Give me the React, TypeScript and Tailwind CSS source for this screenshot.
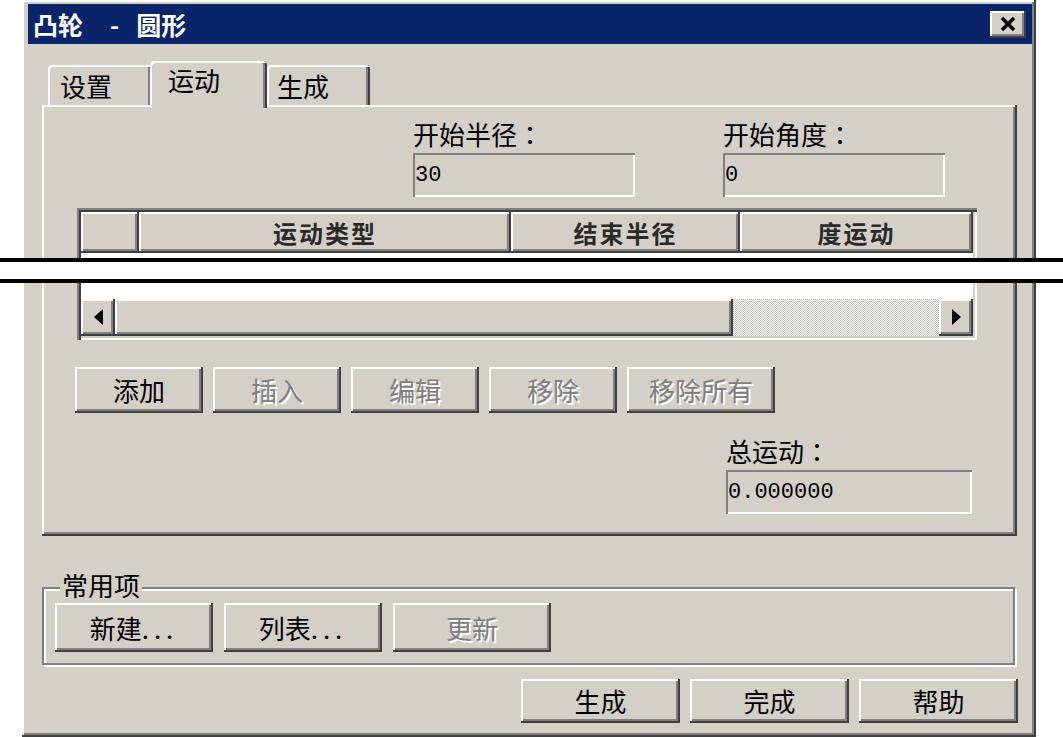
import React from "react";

const raised =
  "shadow-[inset_-2px_-2px_#404040,inset_2px_2px_#ffffff,inset_-4px_-4px_#808080]";
const sunken = "shadow-[inset_2px_2px_#808080,inset_-2px_-2px_#ffffff]";
const disabledText = "text-[#808080] [text-shadow:2px_2px_0_#ffffff]";

type BtnProps = {
  label: React.ReactNode;
  className: string;
  disabled?: boolean;
};

function Btn({ label, className, disabled }: BtnProps) {
  return (
    <div
      className={`flex shrink-0 items-center justify-center bg-[#d4d0c8] text-[26px] leading-[30px] ${raised} ${className} ${
        disabled ? disabledText : "text-black"
      }`}
    >
      {label}
    </div>
  );
}

function Field({ label, value, className }: { label: string; value: string; className: string }) {
  return (
    <div className={className}>
      <div className="text-[26px] leading-[30px] whitespace-nowrap">
        {label}
        <span className="font-['Noto_Sans_CJK_JP',sans-serif]">：</span>
      </div>
      <div
        className={`mt-[4px] flex h-[44px] items-center pl-[2px] font-['Liberation_Mono',monospace] text-[22px] ${sunken}`}
      >
        {value}
      </div>
    </div>
  );
}

function Arrow({ dir }: { dir: "left" | "right" }) {
  return (
    <div className={`flex w-[34px] shrink-0 items-center justify-center bg-[#d4d0c8] ${raised}`}>
      <svg width="9" height="16" viewBox="0 0 9 16" className="-mt-[2px]">
        <path d={dir === "left" ? "M9 0 L0 8 L9 16 Z" : "M0 0 L9 8 L0 16 Z"} fill="#000" />
      </svg>
    </div>
  );
}

const dots = <span className="tracking-[5px]">...</span>;

export default function App() {
  return (
    <div className="relative h-[737px] w-[1063px] overflow-hidden bg-white font-['Noto_Sans_CJK_SC','Noto_Sans_CJK_JP',sans-serif] text-black">
      <div
        className={`ml-[22px] flex h-[737px] w-[1014px] flex-col bg-[#d4d0c8] pt-[4px] pr-[4px] pl-[6px] ${raised}`}
      >
        {/* title bar */}
        <div className="flex h-[40px] shrink-0 items-center bg-[#0a246a] pl-[5px] text-[25px] leading-none font-bold text-white">
          <span>凸轮</span>
          <span className="ml-[27px]">-</span>
          <span className="ml-[17px]">圆形</span>
          <div className={`mr-[6px] ml-auto flex h-[27px] w-[36px] items-center justify-center bg-[#d4d0c8] ${raised}`}>
            <svg width="16" height="14" viewBox="0 0 16 14" className="-mt-[1px]">
              <path d="M2 1 L14 13 M14 1 L2 13" stroke="#000" strokeWidth="3.5" />
            </svg>
          </div>
        </div>

        {/* tabs */}
        <div className="mt-[17px] flex h-[44px] shrink-0 items-end pl-[20px] text-[26px] leading-[30px]">
          <div className="h-[40px] w-[104px] rounded-t-[4px] pt-[6px] pl-[12px] shadow-[inset_2px_2px_#ffffff,inset_-2px_0_#404040,inset_-4px_0_#808080]">
            设置
          </div>
          <div className="relative z-10 -mb-[3px] -ml-[2px] h-[47px] w-[117px] rounded-t-[4px] bg-[#d4d0c8] pt-[4px] pl-[18px] shadow-[inset_2px_2px_#ffffff,inset_-2px_0_#404040,inset_-4px_0_#808080]">
            运动
          </div>
          <div className="h-[40px] w-[103px] rounded-t-[4px] pt-[6px] pl-[10px] shadow-[inset_2px_2px_#ffffff,inset_-2px_0_#404040,inset_-4px_0_#808080]">
            生成
          </div>
        </div>

        {/* tab page */}
        <div className={`ml-[14px] flex h-[431px] w-[975px] shrink-0 flex-col ${raised}`}>
          <div className="mt-[14px] flex pl-[371px]">
            <Field label="开始半径" value="30" className="w-[222px]" />
            <Field label="开始角度" value="0" className="ml-[88px] w-[222px]" />
          </div>

          <div className="mt-[11px] ml-[35px] flex h-[132px] w-[900px] flex-col p-[4px] shadow-[inset_2px_2px_#808080,inset_4px_4px_#404040,inset_-2px_-2px_#ffffff,inset_-4px_-4px_#d4d0c8]">
            <div className="flex h-[41px] shrink-0 text-[24px] leading-none font-bold tracking-[2px] text-[#2a2a2a]">
              <div className={`w-[58px] ${raised}`} />
              <div className={`flex w-[372px] items-center justify-center ${raised}`}>运动类型</div>
              <div className={`flex w-[229px] items-center justify-center ${raised}`}>结束半径</div>
              <div className={`flex flex-1 items-center justify-center ${raised}`}>度运动</div>
            </div>
            <div className="h-[46px] shrink-0 bg-white" />
            <div className="flex h-[37px] shrink-0">
              <Arrow dir="left" />
              <div className={`w-[618px] shrink-0 bg-[#d4d0c8] ${raised}`} />
              <div className="flex-1 bg-[image:repeating-conic-gradient(#ffffff_0_25%,#c8c4bc_0_50%)] bg-[length:2px_2px]" />
              <Arrow dir="right" />
            </div>
          </div>

          <div className="mt-[27px] ml-[33px] flex gap-[10px]">
            <Btn label="添加" className="h-[46px] w-[128px]" />
            <Btn label="插入" className="h-[46px] w-[128px]" disabled />
            <Btn label="编辑" className="h-[46px] w-[128px]" disabled />
            <Btn label="移除" className="h-[46px] w-[128px]" disabled />
            <Btn label="移除所有" className="h-[46px] w-[148px]" disabled />
          </div>

          <Field label="总运动" value="0.000000" className="mt-[23px] ml-[684px] w-[246px]" />
        </div>

        {/* common group */}
        <div className="relative mt-[51px] ml-[14px] h-[78px] w-[973px] shrink-0 border-2 border-[#808080] shadow-[inset_2px_2px_#ffffff,2px_2px_#ffffff]">
          <span className="absolute -top-[19px] left-[16px] bg-[#d4d0c8] px-[2px] text-[26px] leading-[30px]">
            常用项
          </span>
          <div className="mt-[14px] ml-[11px] flex gap-[11px]">
            <Btn label={<>新建{dots}</>} className="h-[49px] w-[158px]" />
            <Btn label={<>列表{dots}</>} className="h-[49px] w-[158px]" />
            <Btn label="更新" className="h-[49px] w-[158px]" disabled />
          </div>
        </div>

        {/* dialog buttons */}
        <div className="mt-[14px] flex justify-end gap-[10px] pr-[14px]">
          <Btn label="生成" className="h-[44px] w-[159px]" />
          <Btn label="完成" className="h-[44px] w-[159px]" />
          <Btn label="帮助" className="h-[44px] w-[159px]" />
        </div>
      </div>

      {/* torn-screenshot break mark */}
      <div className="absolute top-[258px] left-0 h-[25px] w-full border-y-4 border-black bg-white" />
    </div>
  );
}
